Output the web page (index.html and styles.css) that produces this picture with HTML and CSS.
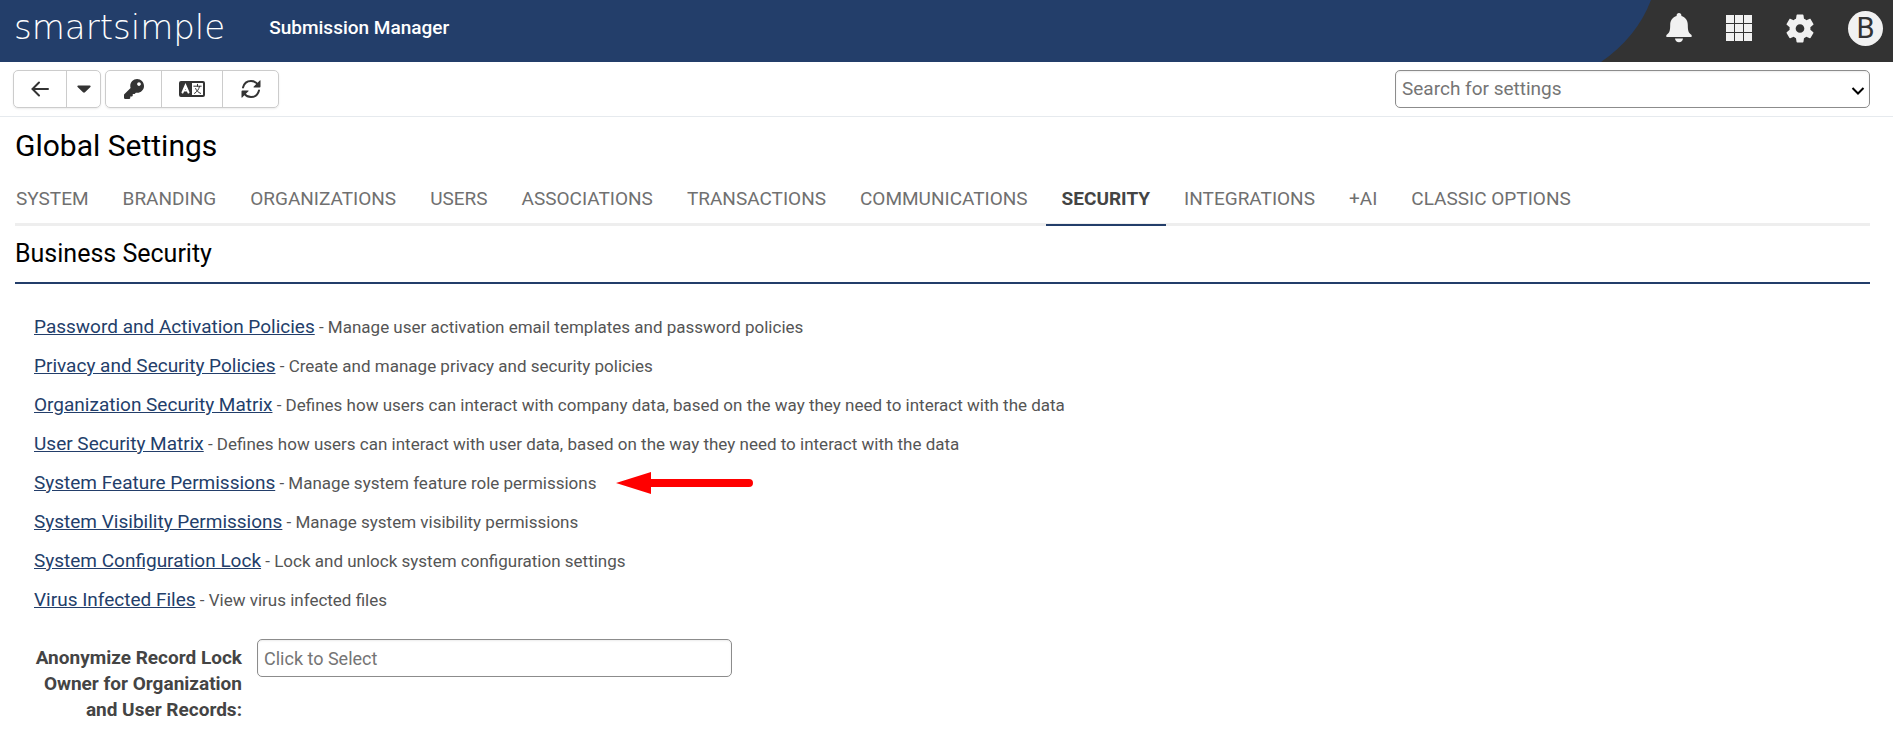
FILE: index.html
```html
<!DOCTYPE html>
<html lang="en">
<head>
    <meta charset="UTF-8">
    <meta name="viewport" content="width=device-width, initial-scale=1.0">
    <title>Global Settings | Submission Manager</title>
    <link rel="stylesheet" href="styles.css">
</head>
<body>
    <header class="header">
        <div class="brand">
            <a class="logo" href="#">smartsimple</a>
            <span class="app-name">Submission Manager</span>
        </div>
        <div class="header-actions">
            <svg class="curve" viewBox="0 0 50 62" preserveAspectRatio="none" aria-hidden="true"><path d="M0 0H50Q36 37 0 62Z"/></svg>
            <button class="header-btn" type="button" aria-label="Notifications">
                <svg width="26" height="30" viewBox="0 0 26 30"><path d="M13 0c1.500 0 2.400 1 2.400 2.500v.6C19.500 4.200 21.800 7.600 21.800 12c0 6 .9 7.800 3.500 9.700.5.400.6 1.800.1 2.300H.6c-.5-.5-.4-1.900.1-2.300C3.300 19.800 4.200 18 4.200 12c0-4.400 2.300-7.800 6.400-8.900v-.6C10.600 1 11.500 0 13 0zM9 25.500h8c-.2 2.200-1.800 3.800-4 3.800s-3.800-1.600-4-3.800z"/></svg>
            </button>
            <button class="header-btn" type="button" aria-label="Apps">
                <svg width="26" height="26" viewBox="0 0 26 26"><path d="M0 0h8v8H0zM9 0h8v8H9zM18 0h8v8h-8zM0 9h8v8H0zM9 9h8v8H9zM18 9h8v8h-8zM0 18h8v8H0zM9 18h8v8H9zM18 18h8v8h-8z"/></svg>
            </button>
            <button class="header-btn" type="button" aria-label="Settings">
                <svg width="28" height="29" viewBox="2.500 2 19 20"><path d="M19.140 12.940c.04-.3.060-.61.060-.94 0-.32-.02-.64-.07-.94l2.030-1.580c.18-.14.230-.41.120-.61l-1.920-3.320c-.12-.22-.37-.29-.59-.22l-2.390.96c-.5-.38-1.030-.7-1.620-.94l-.36-2.540c-.04-.24-.24-.41-.48-.41h-3.840c-.24 0-.43.170-.47.410l-.36 2.540c-.59.240-1.130.570-1.620.940l-2.390-.96c-.22-.08-.47 0-.59.220L2.740 8.870c-.12.210-.08.470.120.610l2.030 1.580c-.05.300-.09.630-.09.940s.02.640.070.940l-2.030 1.580c-.18.140-.23.410-.12.610l1.920 3.320c.12.220.37.290.59.220l2.390-.96c.5.380 1.030.7 1.620.94l.36 2.540c.05.240.240.410.480.410h3.840c.24 0 .44-.17.470-.41l.36-2.540c.59-.24 1.130-.56 1.620-.94l2.390.96c.22.080.470 0 .59-.22l1.920-3.320c.12-.22.070-.47-.12-.61l-2.010-1.580zM12 15c-1.650 0-3-1.350-3-3s1.350-3 3-3 3 1.350 3 3-1.350 3-3 3z"/></svg>
            </button>
            <button class="avatar" type="button" aria-label="Account">B</button>
        </div>
    </header>

    <div class="toolbar">
        <div class="toolbar-buttons">
            <div class="btn-group">
                <button class="btn btn-back" type="button" aria-label="Back">
                    <svg width="18" height="16" viewBox="0 0 18 16"><path class="line" d="M17 8H2M8 1.500L1.500 8 8 14.500"/></svg>
                </button>
                <button class="btn btn-caret" type="button" aria-label="History">
                    <svg width="14" height="8" viewBox="0 0 14 8"><path d="M1.200.5h11.600c.8 0 1.100.8.6 1.400L8 7.300c-.6.6-1.400.6-2 0L.6 1.900C.1 1.300.4.500 1.200.500z"/></svg>
                </button>
            </div>
            <div class="btn-group">
                <button class="btn btn-key" type="button" aria-label="Permissions">
                    <svg width="20" height="20" viewBox="0 0 512 512"><path d="M512 176.001C512 273.203 433.202 352 336 352c-11.220 0-22.190-1.062-32.827-3.069l-24.012 27.014A23.999 23.999 0 0 1 261.223 384H224v40c0 13.255-10.745 24-24 24h-40v40c0 13.255-10.745 24-24 24H24c-13.255 0-24-10.745-24-24v-78.059c0-6.365 2.529-12.470 7.029-16.971l161.802-161.802C163.108 213.814 160 195.271 160 176 160 78.798 238.797.001 335.999 0 433.488-.001 512 78.511 512 176.001zM336 128c0 26.510 21.490 48 48 48s48-21.490 48-48-21.490-48-48-48-48 21.490-48 48z"/></svg>
                </button>
                <button class="btn btn-lang" type="button" aria-label="Translate">
                    <svg width="26" height="16" viewBox="0 0 26 16"><path fill-rule="evenodd" d="M2 0h22a2 2 0 0 1 2 2v12a2 2 0 0 1-2 2H2a2 2 0 0 1-2-2V2a2 2 0 0 1 2-2zM13 2v12h10.500a.5.500 0 0 0 .5-.5v-11a.5.500 0 0 0-.5-.5z"/><path class="cut" d="M3.500 11.500L6.500 4.500 9.500 11.500M4.600 9.500h3.800"/><path class="thin" d="M14.800 5.200h7.400M18.500 3.300v1.900M20.500 5.400c-.6 3-2.600 5.700-5 7M16.600 7.500c.8 2 2.600 4 5 4.900"/></svg>
                </button>
                <button class="btn btn-sync" type="button" aria-label="Refresh">
                    <svg width="20" height="20" viewBox="0 0 20 20"><path class="line" d="M2 8.500C3 4.600 6.200 2 10 2c2.600 0 5 1.200 6.600 3.200M18 11.500C17 15.400 13.800 18 10 18c-2.600 0-5-1.200-6.600-3.200"/><path d="M19.500 1.800v5.700c0 .6-.3.900-.9.900h-5.700c-.5 0-.6-.4-.3-.7l6.200-6.200c.3-.3.700-.2.700.3zM.5 18.200v-5.700c0-.6.3-.9.900-.9h5.700c.5 0 .6.4.3.700l-6.200 6.200c-.3.300-.7.200-.7-.3z"/></svg>
                </button>
            </div>
        </div>
        <select class="field search" aria-label="Search for settings">
            <option>Search for settings</option>
        </select>
    </div>

    <main class="content">
        <h1 class="page-title">Global Settings</h1>
        <nav class="tabs">
            <a class="tab" href="#">SYSTEM</a>
            <a class="tab" href="#">BRANDING</a>
            <a class="tab" href="#">ORGANIZATIONS</a>
            <a class="tab" href="#">USERS</a>
            <a class="tab" href="#">ASSOCIATIONS</a>
            <a class="tab" href="#">TRANSACTIONS</a>
            <a class="tab" href="#">COMMUNICATIONS</a>
            <a class="tab active" href="#" aria-current="page">SECURITY</a>
            <a class="tab" href="#">INTEGRATIONS</a>
            <a class="tab" href="#">+AI</a>
            <a class="tab" href="#">CLASSIC OPTIONS</a>
        </nav>

        <h2 class="section-title">Business Security</h2>
        <ul class="settings">
            <li><a href="#">Password and Activation Policies</a> - Manage user activation email templates and password policies</li>
            <li><a href="#">Privacy and Security Policies</a> - Create and manage privacy and security policies</li>
            <li><a href="#">Organization Security Matrix</a> - Defines how users can interact with company data, based on the way they need to interact with the data</li>
            <li><a href="#">User Security Matrix</a> - Defines how users can interact with user data, based on the way they need to interact with the data</li>
            <li><a href="#">System Feature Permissions</a> - Manage system feature role permissions<svg class="arrow" width="138" height="24" viewBox="0 0 138 24" aria-hidden="true"><path d="M0 12L35 1v7h98a4 4 0 0 1 0 8H35v7z"/></svg></li>
            <li><a href="#">System Visibility Permissions</a> - Manage system visibility permissions</li>
            <li><a href="#">System Configuration Lock</a> - Lock and unlock system configuration settings</li>
            <li><a href="#">Virus Infected Files</a> - View virus infected files</li>
        </ul>

        <div class="form-row">
            <label class="form-label" for="anonymize">Anonymize Record Lock Owner for Organization and User Records:</label>
            <input class="field" id="anonymize" type="text" placeholder="Click to Select">
        </div>
    </main>
</body>
</html>
```
FILE: styles.css
```css
* {
    box-sizing: border-box;
}

body {
    margin: 0;
    font-family: Roboto, Arial, sans-serif;
    font-size: 17px;
    color: #555;
    background-color: #fff;
}

button {
    padding: 0;
    border: 0;
    background: none;
    font-family: inherit;
    color: inherit;
    cursor: pointer;
}

svg {
    display: block;
    fill: currentColor;
}

/* header */
.header {
    display: flex;
    justify-content: space-between;
    height: 62px;
    background-color: #233e6a;
}

.brand {
    display: flex;
    align-items: center;
    gap: 44px;
    padding: 0 0 8px 14px;
    color: #fff;
}

.logo {
    font-family: "DejaVu Sans", sans-serif;
    font-size: 34px;
    font-weight: 200;
    line-height: 40px;
    color: #fff;
    text-decoration: none;
}

.app-name {
    font-size: 19px;
    font-weight: 500;
}

.header-actions {
    display: flex;
    align-items: center;
    gap: 34px;
    padding: 0 10px 6px 0;
    background-color: #333;
    color: #f1f1f1;
}

.curve {
    width: 50px;
    height: 62px;
    margin: 0 -19px -6px 0;
    fill: #233e6a;
}

.avatar {
    width: 35px;
    height: 35px;
    border-radius: 50%;
    background-color: #f1f1f1;
    color: #333;
    font-size: 29px;
    line-height: 35px;
}

/* toolbar */
.toolbar {
    display: flex;
    justify-content: space-between;
    align-items: center;
    padding: 8px 23px 8px 13px;
    border-bottom: 1px solid #e6eaee;
}

.toolbar-buttons {
    display: flex;
    gap: 4px;
}

.btn-group {
    display: flex;
    border: 1px solid #ccc;
    border-radius: 5px;
    box-shadow: 0 1px 2px rgba(0, 0, 0, 0.08);
}

.btn {
    display: flex;
    align-items: center;
    justify-content: center;
    height: 36px;
    color: #333;
}

.btn + .btn {
    border-left: 1px solid #ccc;
}

.btn-back {
    width: 52px;
}

.btn-caret {
    width: 34px;
}

.btn-key {
    width: 55px;
}

.btn-lang {
    width: 61px;
}

.btn-sync {
    width: 56px;
}

.line,
.cut,
.thin {
    fill: none;
    stroke: currentColor;
    stroke-width: 2;
    stroke-linecap: round;
}

.cut {
    stroke: #fff;
}

.thin {
    stroke-width: 1;
}

.field {
    width: 475px;
    height: 38px;
    padding: 0 6px;
    border: 1px solid #8c8c8c;
    border-radius: 5px;
    background-color: #fff;
    box-shadow: inset 0 1px 2px rgba(0, 0, 0, 0.08);
    font-family: inherit;
    font-size: 18px;
    color: #757575;
}

.field::placeholder {
    color: #757575;
}

.search {
    appearance: none;
    padding-bottom: 2px;
    font-size: 19px;
    background-image: url("data:image/svg+xml,%3Csvg xmlns='http://www.w3.org/2000/svg' width='14' height='8' viewBox='0 0 14 8'%3E%3Cpath d='M1.500 1l5.500 5.500L12.500 1' fill='none' stroke='%23000' stroke-width='2'/%3E%3C/svg%3E");
    background-repeat: no-repeat;
    background-position: right 4px top 16px;
}

/* content */
.content {
    padding: 11px 23px 16px 15px;
}

.page-title {
    margin: 0;
    font-size: 30px;
    font-weight: 400;
    line-height: 36px;
    color: #000;
}

.tabs {
    display: flex;
    gap: 2px;
    margin-top: 14px;
    box-shadow: inset 0 -3px #eee;
}

.tab {
    padding: 8px 16px 12px;
    border-bottom: 2px solid transparent;
    font-size: 19px;
    line-height: 26px;
    color: #707070;
    text-decoration: none;
}

.tab:first-child {
    padding-left: 1px;
}

.tab.active {
    border-bottom-color: #233e6a;
    font-weight: 700;
    color: #444;
}

.section-title {
    margin: 0;
    padding: 12px 0;
    border-bottom: 2px solid #233e6a;
    font-size: 25px;
    font-weight: 400;
    line-height: 32px;
    color: #000;
}

.settings {
    display: flex;
    flex-direction: column;
    gap: 13px;
    margin: 0;
    padding: 30px 19px 0;
    list-style: none;
    line-height: 26px;
}

.settings a {
    font-size: 19px;
    line-height: 20px;
    color: #233e6a;
}

.arrow {
    display: inline-block;
    margin-left: 20px;
    vertical-align: -6px;
    fill: #f00;
}

.form-row {
    display: flex;
    align-items: flex-start;
    gap: 15px;
    padding: 26px 15px 0;
}

.form-label {
    width: 212px;
    padding-top: 6px;
    font-size: 19px;
    font-weight: 700;
    line-height: 26px;
    color: #444;
    text-align: right;
}
```
